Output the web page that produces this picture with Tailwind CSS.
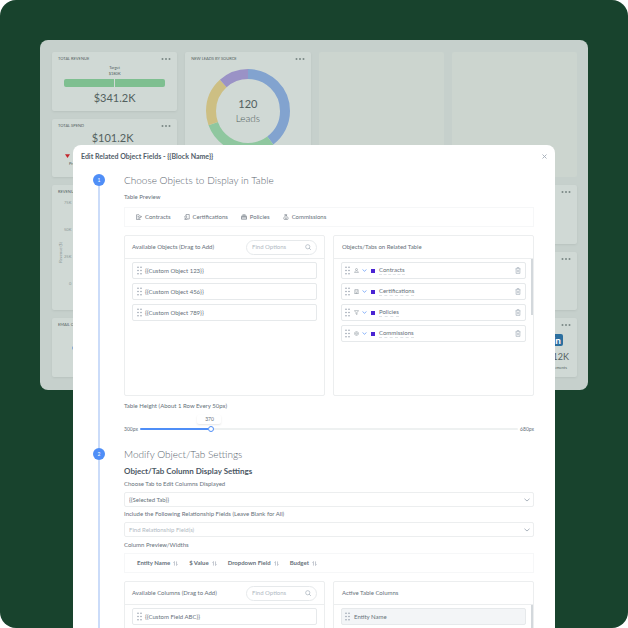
<!DOCTYPE html>
<html lang="en">

<head>
    <meta charset="UTF-8" />
    <meta name="viewport" content="width=device-width, initial-scale=1.0" />
    <title>Edit Related Object Fields</title>
    <script src="https://cdn.jsdelivr.net/npm/@tailwindcss/browser@4"></script>
</head>

<body class="bg-white font-['Lato','Open_Sans',sans-serif] text-[#66707a]">

    <!-- Shared icons -->
    <svg class="hidden" aria-hidden="true">
        <symbol id="dots" viewBox="0 0 10 4">
            <circle cx="1.5" cy="2" r="1" /><circle cx="5" cy="2" r="1" /><circle cx="8.5" cy="2" r="1" />
        </symbol>
        <symbol id="grip" viewBox="0 0 5 9">
            <circle cx="1" cy="1.2" r=".7" /><circle cx="4" cy="1.2" r=".7" />
            <circle cx="1" cy="4.5" r=".7" /><circle cx="4" cy="4.5" r=".7" />
            <circle cx="1" cy="7.8" r=".7" /><circle cx="4" cy="7.8" r=".7" />
        </symbol>
        <symbol id="chevron" viewBox="0 0 12 8">
            <path d="M1.5 2 6 6l4.500-4" fill="none" stroke="currentColor" stroke-width="1.800" stroke-linecap="round" />
        </symbol>
        <symbol id="search" viewBox="0 0 12 12">
            <circle cx="5.500" cy="5.500" r="4.200" fill="none" stroke="currentColor" stroke-width="1.300" />
            <path d="m8.600 8.600 2.600 2.600" stroke="currentColor" stroke-width="1.400" stroke-linecap="round" />
        </symbol>
        <symbol id="trash" viewBox="0 0 12 14">
            <path d="M1 3.500h10M4 3.300V1.200h4v2.100M2.200 3.500v9.300h7.600V3.500M4.700 6v4.500M7.300 6v4.500" fill="none" stroke="currentColor" stroke-width="1.300" />
        </symbol>
        <symbol id="sort" viewBox="0 0 12 12">
            <path d="M3.500 11V1.500M1 4l2.500-2.800M8.500 1v9.500M11 8l-2.500 2.800" fill="none" stroke="currentColor" stroke-width="1.200" />
        </symbol>
        <symbol id="contract" viewBox="0 0 12 12">
            <path d="M8.500 10v1H1V1.500h5L8.500 4M3 5h3M3 8h2M5.500 8.800l.6-2 4-2.800 1.200 1.500-4 2.900z" fill="none" stroke="currentColor" stroke-width="1.100" />
        </symbol>
        <symbol id="certificate" viewBox="0 0 12 12">
            <path d="M4 4V1h6.500v9H6M1 10.800h5V8.500M3.500 4.200a2 2 0 1 0 .1 0M2.300 8v2.800" fill="none" stroke="currentColor" stroke-width="1.100" />
        </symbol>
        <symbol id="policy" viewBox="0 0 12 12">
            <path d="M2 5V3l2-1.500h4L10 3v2M1 5h10v5.500H1zM1 7.700h10M4 3.500h4" fill="none" stroke="currentColor" stroke-width="1.200" />
        </symbol>
        <symbol id="commission" viewBox="0 0 12 12">
            <path d="M4.500 4 3.500 1.200h4L6.700 4M4.500 4h2.700c2 1.500 3 3.500 3 5s-.8 2-2 2H3.500c-1.200 0-2-.7-2-2s1-3.500 3-5zM6 5.800v3.700M4.800 9h2.200" fill="none" stroke="currentColor" stroke-width="1.100" />
        </symbol>
        <symbol id="person" viewBox="0 0 12 12">
            <circle cx="6" cy="3.500" r="2.300" fill="none" stroke="currentColor" stroke-width="1.200" />
            <path d="M1.500 11c0-2.500 1.600-4.200 4.500-4.200s4.500 1.700 4.500 4.200z" fill="none" stroke="currentColor" stroke-width="1.200" />
        </symbol>
        <symbol id="building" viewBox="0 0 12 12">
            <path d="M2 11V1.500h8V11M1 11h10M4 4h1.500M7 4h1.500M4 6.500h1.500M7 6.500h1.500M5 11V9h2v2" fill="none" stroke="currentColor" stroke-width="1.300" />
        </symbol>
        <symbol id="funnel" viewBox="0 0 12 12">
            <path d="M1 1.500h10L7.200 6.300V11L4.800 9.500V6.300z" fill="none" stroke="currentColor" stroke-width="1.200" />
        </symbol>
        <symbol id="gear" viewBox="0 0 12 12">
            <path d="M6 1l4.300 2.500v5L6 11 1.700 8.500v-5z" fill="none" stroke="currentColor" stroke-width="1.200" />
            <circle cx="6" cy="6" r="1.900" fill="none" stroke="currentColor" stroke-width="1.200" />
        </symbol>
    </svg>

    <main class="relative h-screen overflow-hidden rounded-2xl bg-[#18432d] p-10">

        <!-- Dashboard behind the dialog -->
        <div class="grid h-[350px] grid-cols-4 grid-rows-5 gap-2 rounded-lg bg-[#c6d0cc] pt-3 pr-[11px] pb-[13px] pl-3 text-[#53615f]">
            <section class="rounded-xs bg-[#d0d9d5] px-[6px] pt-[3px] shadow-sm shadow-black/5">
                <div class="flex items-center justify-between">
                    <h2 class="text-[4px] leading-[8px]">TOTAL REVENUE</h2>
                    <button aria-label="More"><svg class="h-1 w-[10px] fill-[#7a8785]"><use href="#dots" /></svg></button>
                </div>
                <p class="mt-[2px] text-center text-[4px] leading-[6px]">Target<br>$180K</p>
                <div class="mx-[6px] mt-[2px] flex h-2 gap-px overflow-hidden rounded-xs">
                    <span class="flex-1 bg-[#7ebf90]"></span><span class="flex-1 bg-[#7ebf90]"></span>
                </div>
                <p class="mt-[3px] text-center text-[11px] leading-[16px]">$341.2K</p>
            </section>

            <section class="row-span-2 rounded-xs bg-[#d0d9d5] px-[6px] pt-[3px] shadow-sm shadow-black/5">
                <div class="flex items-center justify-between">
                    <h2 class="text-[4px] leading-[8px]">NEW LEADS BY SOURCE</h2>
                    <button aria-label="More"><svg class="h-1 w-[10px] fill-[#7a8785]"><use href="#dots" /></svg></button>
                </div>
                <div class="mt-[6px] grid place-items-center">
                    <svg class="col-start-1 row-start-1 size-[84px] -rotate-90" viewBox="0 0 84 84" fill="none" stroke-width="10">
                        <circle cx="42" cy="42" r="37" pathLength="360" stroke="#82a3cf" stroke-dasharray="143 217" />
                        <circle cx="42" cy="42" r="37" pathLength="360" stroke="#8fc79f" stroke-dasharray="107 253" stroke-dashoffset="-143" />
                        <circle cx="42" cy="42" r="37" pathLength="360" stroke="#cdbf83" stroke-dasharray="68 292" stroke-dashoffset="-250" />
                        <circle cx="42" cy="42" r="37" pathLength="360" stroke="#9a92c6" stroke-dasharray="42 318" stroke-dashoffset="-318" />
                    </svg>
                    <p class="col-start-1 row-start-1 text-center text-[11px] leading-[14px]">120<br><span class="text-[10px] leading-[12px] font-light">Leads</span></p>
                </div>
            </section>

            <section class="row-span-2 rounded-xs bg-[#ccd5cf]"></section>
            <section class="row-span-2 rounded-xs bg-[#ccd5cf]"></section>

            <section class="rounded-xs bg-[#d0d9d5] px-[6px] pt-[3px] shadow-sm shadow-black/5">
                <div class="flex items-center justify-between">
                    <h2 class="text-[4px] leading-[8px]">TOTAL SPEND</h2>
                    <button aria-label="More"><svg class="h-1 w-[10px] fill-[#7a8785]"><use href="#dots" /></svg></button>
                </div>
                <p class="mr-1 text-center text-[11px] leading-[16px]">$101.2K</p>
                <svg class="mt-[8px] ml-[7px] h-1 w-[5px] fill-[#c3262c]" viewBox="0 0 4 3"><path d="M0 0h4L2 3z" /></svg>
                <p class="mt-[2px] ml-[11px] text-[4px] leading-[8px]">Previous</p>
            </section>

            <section class="col-start-1 row-span-2 row-start-3 flex flex-col rounded-xs bg-[#d0d9d5] px-[6px] pt-[3px] shadow-sm shadow-black/5">
                <h2 class="text-[4px] leading-[8px]">REVENUE</h2>
                <div class="flex text-[4px] leading-[6px] text-[#8b9795]">
                    <span class="rotate-180 self-center text-center [writing-mode:vertical-rl]">Revenue ($)</span>
                    <div class="mt-1 grid auto-rows-[27px] text-right">
                        <span>75K</span><span>50K</span><span>25K</span><span>0</span>
                    </div>
                </div>
            </section>
            <section class="col-start-4 row-start-3 rounded-xs bg-[#d0d9d5] px-[6px] pt-[3px] text-right shadow-sm shadow-black/5">
                <button class="flex h-2 w-full items-center justify-end" aria-label="More"><svg class="h-1 w-[10px] fill-[#7a8785]"><use href="#dots" /></svg></button>
            </section>
            <section class="col-start-4 row-start-4 rounded-xs bg-[#d0d9d5] px-[6px] pt-[3px] shadow-sm shadow-black/5">
                <button class="flex h-2 w-full items-center justify-end" aria-label="More"><svg class="h-1 w-[10px] fill-[#7a8785]"><use href="#dots" /></svg></button>
                <div class="mt-[18px] mr-4 ml-auto size-3 rounded-full bg-[#7ebf90]"></div>
            </section>
            <section class="col-start-1 row-start-5 rounded-xs bg-[#d0d9d5] px-[6px] pt-[3px] shadow-sm shadow-black/5">
                <h2 class="text-[4px] leading-[8px]">EMAIL OPENS</h2>
                <div class="mt-[17px] ml-[14px] size-1 rounded-full bg-[#82a3cf]"></div>
            </section>
            <section class="col-start-4 row-start-5 flex flex-col items-end rounded-xs bg-[#d0d9d5] px-[6px] pt-[3px] shadow-sm shadow-black/5">
                <button class="flex h-2 items-center" aria-label="More"><svg class="h-1 w-[10px] fill-[#7a8785]"><use href="#dots" /></svg></button>
                <span class="mt-[5px] mr-2 rounded-xs bg-[#2b6f9f] px-[2px] text-[10px] leading-[12px] font-bold text-white">in</span>
                <p class="mt-1 mr-[2px] text-[9px] leading-[14px]">3.12K</p>
                <p class="mr-1 text-[4px] leading-[8px]">Engagements</p>
            </section>
        </div>

        <!-- Dialog -->
        <div role="dialog" aria-labelledby="dialog-title" class="absolute inset-x-[73px] top-[145px] bottom-0 overflow-hidden rounded-t-lg bg-white text-[6px] leading-[8px]">
            <header class="flex h-[22px] items-center justify-between px-2">
                <h1 id="dialog-title" class="text-[7px] leading-[10px] font-bold text-[#525d69]">Edit Related Object Fields - {{Block Name}}</h1>
                <button class="text-[#a3adb8]" aria-label="Close">
                    <svg class="size-[5px]" viewBox="0 0 10 10" fill="none" stroke="currentColor" stroke-width="1.800"><path d="m1 1 8 8M9 1 1 9" /></svg>
                </button>
            </header>

            <!-- Step 1 -->
            <section class="flex pt-[5px] pr-[21px]">
                <div class="flex w-[52px] shrink-0 flex-col items-center pt-[2px]">
                    <span class="flex size-3 items-center justify-center rounded-full bg-[#4f8ef7] text-[5px] text-white">1</span>
                    <span class="w-[2px] flex-1 bg-[#cbdcf9]"></span>
                </div>
                <div class="-ml-px min-w-0 flex-1 pb-[13px]">
                    <h2 class="text-[10px] leading-[16px] font-light text-[#5b6670]">Choose Objects to Display in Table</h2>
                    <h3 class="mt-[5px]">Table Preview</h3>
                    <nav class="mt-[6px] flex h-5 items-center gap-[13px] border border-[#f6f7f8] px-[11px]">
                        <button class="flex items-center gap-[3px]"><svg class="size-[6px]"><use href="#contract" /></svg>Contracts</button>
                        <button class="flex items-center gap-[3px]"><svg class="size-[6px]"><use href="#certificate" /></svg>Certifications</button>
                        <button class="flex items-center gap-[3px]"><svg class="size-[6px]"><use href="#policy" /></svg>Policies</button>
                        <button class="flex items-center gap-[3px]"><svg class="size-[6px]"><use href="#commission" /></svg>Commissions</button>
                    </nav>

                    <div class="mt-2 grid h-[161px] grid-cols-2 gap-2">
                        <div class="rounded-xs border border-[#eceeef]">
                            <div class="flex h-[23px] items-center justify-between border-b border-[#eceeef] px-[7px]">
                                <h3>Available Objects (Drag to Add)</h3>
                                <label class="flex h-[15px] w-[71px] items-center rounded-full border border-[#e6e9eb] px-[5px] text-[#a3adb8]">
                                    <input type="search" placeholder="Find Options" aria-label="Find objects" class="w-full min-w-0 outline-none placeholder:text-[#b1bac3]" />
                                    <svg class="size-[6px] shrink-0"><use href="#search" /></svg>
                                </label>
                            </div>
                            <ul class="space-y-1 px-[7px] pt-[3px]">
                                <li class="flex h-[17px] items-center gap-[3px] rounded-xs border border-[#e6e9eb] px-1"><svg class="h-[9px] w-[5px] fill-[#8791a0]"><use href="#grip" /></svg>{{Custom Object 123}}</li>
                                <li class="flex h-[17px] items-center gap-[3px] rounded-xs border border-[#e6e9eb] px-1"><svg class="h-[9px] w-[5px] fill-[#8791a0]"><use href="#grip" /></svg>{{Custom Object 456}}</li>
                                <li class="flex h-[17px] items-center gap-[3px] rounded-xs border border-[#e6e9eb] px-1"><svg class="h-[9px] w-[5px] fill-[#8791a0]"><use href="#grip" /></svg>{{Custom Object 789}}</li>
                            </ul>
                        </div>

                        <div class="rounded-xs border border-[#eceeef]">
                            <div class="flex h-[23px] items-center border-b border-[#eceeef] px-2">
                                <h3>Objects/Tabs on Related Table</h3>
                            </div>
                            <div class="flex">
                                <ul class="flex-1 space-y-1 pt-[3px] pr-[5px] pl-[7px]">
                                    <li class="flex h-[17px] items-center gap-1 rounded-xs border border-[#e6e9eb] pr-1 pl-[3px]">
                                        <svg class="h-[9px] w-[5px] fill-[#8791a0]"><use href="#grip" /></svg>
                                        <button class="flex items-center gap-[3px]" aria-label="Contracts icon"><svg class="size-[5px] text-[#858e97]"><use href="#person" /></svg><svg class="h-[3px] w-[5px] text-[#4f8ef7]"><use href="#chevron" /></svg></button>
                                        <button class="size-1 bg-[#4a24d3]" aria-label="Contracts colour"></button>
                                        <span class="border-b border-dashed border-[#dfe3e6]">Contracts</span>
                                        <button class="ml-auto text-[#a3adb8]" aria-label="Delete Contracts"><svg class="h-[7px] w-[6px]"><use href="#trash" /></svg></button>
                                    </li>
                                    <li class="flex h-[17px] items-center gap-1 rounded-xs border border-[#e6e9eb] pr-1 pl-[3px]">
                                        <svg class="h-[9px] w-[5px] fill-[#8791a0]"><use href="#grip" /></svg>
                                        <button class="flex items-center gap-[3px]" aria-label="Certifications icon"><svg class="size-[5px] text-[#858e97]"><use href="#building" /></svg><svg class="h-[3px] w-[5px] text-[#4f8ef7]"><use href="#chevron" /></svg></button>
                                        <button class="size-1 bg-[#4a24d3]" aria-label="Certifications colour"></button>
                                        <span class="border-b border-dashed border-[#dfe3e6]">Certifications</span>
                                        <button class="ml-auto text-[#a3adb8]" aria-label="Delete Certifications"><svg class="h-[7px] w-[6px]"><use href="#trash" /></svg></button>
                                    </li>
                                    <li class="flex h-[17px] items-center gap-1 rounded-xs border border-[#e6e9eb] pr-1 pl-[3px]">
                                        <svg class="h-[9px] w-[5px] fill-[#8791a0]"><use href="#grip" /></svg>
                                        <button class="flex items-center gap-[3px]" aria-label="Policies icon"><svg class="size-[5px] text-[#858e97]"><use href="#funnel" /></svg><svg class="h-[3px] w-[5px] text-[#4f8ef7]"><use href="#chevron" /></svg></button>
                                        <button class="size-1 bg-[#4a24d3]" aria-label="Policies colour"></button>
                                        <span class="border-b border-dashed border-[#dfe3e6]">Policies</span>
                                        <button class="ml-auto text-[#a3adb8]" aria-label="Delete Policies"><svg class="h-[7px] w-[6px]"><use href="#trash" /></svg></button>
                                    </li>
                                    <li class="flex h-[17px] items-center gap-1 rounded-xs border border-[#e6e9eb] pr-1 pl-[3px]">
                                        <svg class="h-[9px] w-[5px] fill-[#8791a0]"><use href="#grip" /></svg>
                                        <button class="flex items-center gap-[3px]" aria-label="Commissions icon"><svg class="size-[5px] text-[#858e97]"><use href="#gear" /></svg><svg class="h-[3px] w-[5px] text-[#4f8ef7]"><use href="#chevron" /></svg></button>
                                        <button class="size-1 bg-[#4a24d3]" aria-label="Commissions colour"></button>
                                        <span class="border-b border-dashed border-[#dfe3e6]">Commissions</span>
                                        <button class="ml-auto text-[#a3adb8]" aria-label="Delete Commissions"><svg class="h-[7px] w-[6px]"><use href="#trash" /></svg></button>
                                    </li>
                                </ul>
                                <div class="h-[56px] w-[2px] bg-[#d3d8dc]"></div>
                            </div>
                        </div>
                    </div>

                    <label for="table-height" class="mt-[6px] block">Table Height (About 1 Row Every 50px)</label>
                    <div class="mt-[15px] flex h-2 items-center gap-[2px] text-[5px]">
                        <span>300px</span>
                        <div class="relative flex h-2 flex-1 items-center">
                            <output for="table-height" class="absolute bottom-[9px] -ml-3 w-6 rounded-xs bg-white text-center leading-[9px] shadow-xs shadow-black/10" style="left: 18.4%">370</output>
                            <input id="table-height" type="range" min="300" max="680" value="370"
                                class="h-[2px] w-full appearance-none rounded-full bg-linear-to-r from-[#4f8ef7] from-18% to-[#eef1f1] to-18% [&::-webkit-slider-thumb]:size-[6px] [&::-webkit-slider-thumb]:appearance-none [&::-webkit-slider-thumb]:rounded-full [&::-webkit-slider-thumb]:border [&::-webkit-slider-thumb]:border-[#4f8ef7] [&::-webkit-slider-thumb]:bg-white" />
                        </div>
                        <span>680px</span>
                    </div>
                </div>
            </section>

            <!-- Step 2 -->
            <section class="flex pr-[21px]">
                <div class="flex w-[52px] shrink-0 flex-col items-center">
                    <span class="h-[2px] w-[2px] bg-[#cbdcf9]"></span>
                    <span class="flex size-3 items-center justify-center rounded-full bg-[#4f8ef7] text-[5px] text-white">2</span>
                    <span class="w-[2px] flex-1 bg-[#cbdcf9]"></span>
                </div>
                <div class="-ml-px min-w-0 flex-1">
                    <h2 class="text-[10px] leading-[16px] font-light text-[#5b6670]">Modify Object/Tab Settings</h2>
                    <h3 class="mt-1 text-[8px] leading-[10px] font-bold text-[#4c5864]">Object/Tab Column Display Settings</h3>
                    <label for="tab-select" class="mt-1 block">Choose Tab to Edit Columns Displayed</label>
                    <div class="mt-1 grid items-center">
                        <select id="tab-select" class="col-start-1 row-start-1 h-[15px] appearance-none rounded-xs border border-[#eceeef] px-1">
                            <option>{{Selected Tab}}</option>
                        </select>
                        <svg class="pointer-events-none col-start-1 row-start-1 mr-1 h-1 w-[6px] justify-self-end text-[#a3adb8]"><use href="#chevron" /></svg>
                    </div>
                    <label for="relationship-select" class="mt-[3px] block">Include the Following Relationship Fields (Leave Blank for All)</label>
                    <div class="mt-1 grid items-center">
                        <select id="relationship-select" class="col-start-1 row-start-1 h-[15px] appearance-none rounded-xs border border-[#eceeef] px-1 text-[#b1bac3]">
                            <option>Find Relationship Field(s)</option>
                        </select>
                        <svg class="pointer-events-none col-start-1 row-start-1 mr-1 h-1 w-[6px] justify-self-end text-[#a3adb8]"><use href="#chevron" /></svg>
                    </div>
                    <h3 class="mt-1">Column Preview/Widths</h3>
                    <div class="mt-1 flex h-5 items-center gap-[11px] border border-[#f6f7f8] px-3 font-bold">
                        <button class="flex items-center gap-[3px]">Entity Name<svg class="size-[5px] text-[#8791a0]"><use href="#sort" /></svg></button>
                        <button class="flex items-center gap-[3px]">$ Value<svg class="size-[5px] text-[#8791a0]"><use href="#sort" /></svg></button>
                        <button class="flex items-center gap-[3px]">Dropdown Field<svg class="size-[5px] text-[#8791a0]"><use href="#sort" /></svg></button>
                        <button class="flex items-center gap-[3px]">Budget<svg class="size-[5px] text-[#8791a0]"><use href="#sort" /></svg></button>
                    </div>

                    <div class="mt-2 grid h-[161px] grid-cols-2 gap-2">
                        <div class="rounded-xs border border-[#eceeef]">
                            <div class="flex h-[23px] items-center justify-between border-b border-[#eceeef] px-[7px]">
                                <h3>Available Columns (Drag to Add)</h3>
                                <label class="flex h-[15px] w-[71px] items-center rounded-full border border-[#e6e9eb] px-[5px] text-[#a3adb8]">
                                    <input type="search" placeholder="Find Options" aria-label="Find columns" class="w-full min-w-0 outline-none placeholder:text-[#b1bac3]" />
                                    <svg class="size-[6px] shrink-0"><use href="#search" /></svg>
                                </label>
                            </div>
                            <ul class="space-y-1 px-[7px] pt-[3px]">
                                <li class="flex h-[17px] items-center gap-[3px] rounded-xs border border-[#e6e9eb] px-1"><svg class="h-[9px] w-[5px] fill-[#8791a0]"><use href="#grip" /></svg>{{Custom Field ABC}}</li>
                            </ul>
                        </div>
                        <div class="rounded-xs border border-[#eceeef]">
                            <div class="flex h-[23px] items-center border-b border-[#eceeef] px-2">
                                <h3>Active Table Columns</h3>
                            </div>
                            <div class="flex">
                                <ul class="flex-1 space-y-1 pt-[3px] pr-[5px] pl-[7px]">
                                    <li class="flex h-[17px] items-center gap-1 rounded-xs border border-[#e6e9eb] bg-[#f3f5f7] pr-1 pl-[3px]"><svg class="h-[9px] w-[5px] fill-[#8791a0]"><use href="#grip" /></svg>Entity Name</li>
                                </ul>
                                <div class="h-[56px] w-[2px] bg-[#d3d8dc]"></div>
                            </div>
                        </div>
                    </div>
                </div>
            </section>
        </div>
    </main>
</body>

</html>
